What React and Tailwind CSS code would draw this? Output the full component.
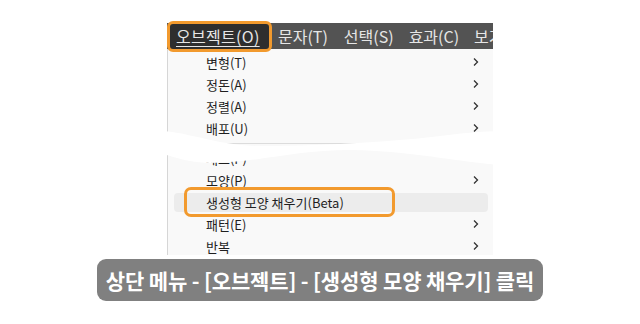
import React from "react";

const topRows = ["변형(T)", "정돈(A)", "정렬(A)", "배포(U)"];

function Chevron() {
  return (
    <svg width="8" height="10" viewBox="0 0 8 10" className="text-[#333]">
      <path d="M2 1.5 L5.5 5 L2 8.5" fill="none" stroke="currentColor" strokeWidth="1.3" />
    </svg>
  );
}

function Row({ label, arrow = true, active = false }) {
  return (
    <div className="relative h-[22px] flex items-center">
      {active && (
        <div className="absolute left-[6px] right-[5px] top-[2px] bottom-[1px] rounded-[4px] bg-[#ececec]" />
      )}
      {active && (
        <div className="absolute left-[16px] w-[211px] -top-[4px] h-[30px] rounded-[7px] border-[3px] border-[#f29a2e]" />
      )}
      <span className="relative pl-[38px] flex-1 text-[13px] text-[#1f1f1f] leading-none">{label}</span>
      {arrow && (
        <span className="relative pr-[13px]">
          <Chevron />
        </span>
      )}
    </div>
  );
}

export default function App() {
  return (
    <div
      className="relative w-[640px] h-[324px] bg-white overflow-hidden"
      style={{ fontFamily: '"Noto Sans CJK KR", "Noto Sans", sans-serif' }}
    >
      <div className="ml-[167px] pt-[23px] w-[326px]">
        {/* 상단 메뉴바 */}
        <div className="h-[26px] bg-[#535353] flex items-center text-[16px] text-[#e6e6e6] whitespace-nowrap">
          <div className="relative -my-[4px] h-[31px] w-[105px] flex items-center rounded-[6px] border-[3px] border-[#f29a2e] bg-[#2e2e2e] pl-[6px]">
            <span className="underline underline-offset-[3px] decoration-1 tracking-[0.3px]">오브젝트(O)</span>
          </div>
          <div className="flex-1 h-full flex items-center overflow-hidden pl-[6px]">
            <span>문자(T)</span>
            <span className="ml-[16px]">선택(S)</span>
            <span className="ml-[15px]">효과(C)</span>
            <span className="ml-[15px]">보기(V)</span>
          </div>
        </div>

        {/* 드롭다운 */}
        <div className="h-[206px] bg-[#f9f9f9] border-l border-[#d6d6d6] overflow-hidden pt-[2px]">
          {topRows.map((r) => (
            <Row key={r} label={r} />
          ))}
          <div className="mx-[3px] mt-[4px] h-px bg-[#dcdcdc]" />
          <div className="h-[3px]" />
          <Row label="패스(P)" />
          <Row label="모양(P)" />
          <Row label="생성형 모양 채우기(Beta)" arrow={false} active />
          <Row label="패턴(E)" />
          <Row label="반복" />
        </div>
      </div>

      {/* 잘린 부분 표시용 물결 */}
      <svg
        className="absolute left-0 top-0 pointer-events-none"
        width="640"
        height="324"
        viewBox="0 0 640 324"
      >
        <path
          d="M150 130 C190 131 215 146 262 146 C330 146 410 140 440 136 C470 132 490 131 510 131 L510 165 C470 165 420 151 350 150 C295 150 255 163 210 163 C180 162 165 153 150 150 Z"
          fill="white"
        />
      </svg>

      {/* 하단 캡션 */}
      <div className="absolute left-[97px] top-[259px] w-[446px] h-[42px] rounded-[9px] bg-[#808080] flex items-center justify-center">
        <span className="text-white text-[21px] font-bold tracking-[-0.15px] leading-none">
          상단 메뉴 - [오브젝트] - [생성형 모양 채우기] 클릭
        </span>
      </div>
    </div>
  );
}
